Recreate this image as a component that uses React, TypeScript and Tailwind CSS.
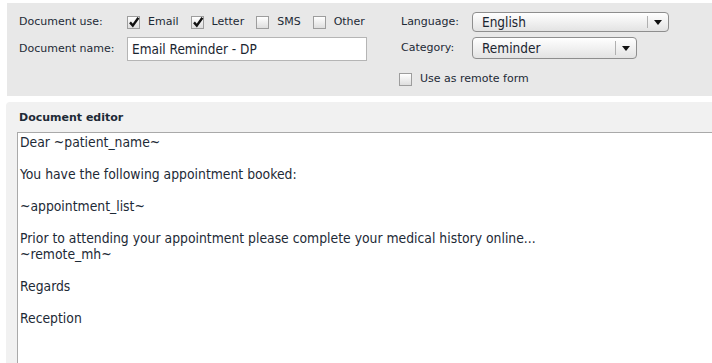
import React from "react";

const ink = "text-[#1d2a36]";
const labelFont = { fontFamily: '"DejaVu Sans", Verdana, sans-serif' };
const bodyFont = { fontFamily: '"DejaVu Sans Condensed", "DejaVu Sans", Tahoma, sans-serif' };

function Box({ checked }: { checked?: boolean }) {
  return (
    <span className="relative flex h-[13px] w-[13px] shrink-0 items-center justify-center border border-[#9d9d9d] bg-gradient-to-b from-white to-[#dedede]">
      {checked && (
        <svg width="12" height="12" viewBox="0 0 12 12" className="absolute left-[0px] top-[-1px]">
          <path d="M2 6.4 L4.8 9.6 L10.4 1.8" fill="none" stroke="#111" strokeWidth="2.4" />
        </svg>
      )}
    </span>
  );
}

function Check({ label, checked }: { label: string; checked?: boolean }) {
  return (
    <label className="flex items-center gap-[8px]">
      <Box checked={checked} />
      <span>{label}</span>
    </label>
  );
}

function Select({ value, width, height }: { value: string; width: string; height: string }) {
  return (
    <div
      className={`flex items-center rounded-[4px] border border-[#8e8e8e] bg-gradient-to-b from-white to-[#e3e3e3] ${width} ${height}`}
    >
      <span className="flex-1 pl-[9px] text-[13.5px] text-[#1b2530]" style={bodyFont}>
        {value}
      </span>
      <span className="h-[70%] w-px bg-[#b0b0b0]" />
      <span className="flex w-[20px] justify-center">
        <svg width="8" height="5" viewBox="0 0 8 5">
          <path d="M0 0 H8 L4 5 Z" fill="#111" />
        </svg>
      </span>
    </div>
  );
}

export default function App() {
  return (
    <div className={`h-[363px] w-[712px] overflow-hidden bg-white ${ink}`}>
      <div className="ml-[7px] mt-[3px] flex h-[93px] bg-[#e8e8e8] pl-[12px] pt-[9px] text-[11px]" style={labelFont}>
        <div className="w-[382px]">
          <div className="flex h-[20px] items-center">
            <span className="w-[108px]">Document use:</span>
            <div className="flex items-center gap-[12px]">
              <Check label="Email" checked />
              <Check label="Letter" checked />
              <Check label="SMS" />
              <Check label="Other" />
            </div>
          </div>
          <div className="mt-[5px] flex h-[24px] items-center">
            <span className="w-[108px]">Document name:</span>
            <input
              readOnly
              value="Email Reminder - DP"
              className="h-[24px] w-[240px] border border-[#b5b5b5] bg-white pl-[4px] text-[13.5px] text-[#1b2530] outline-none"
              style={bodyFont}
            />
          </div>
        </div>
        <div>
          <div className="flex h-[20px] items-center">
            <span className="w-[71px]">Language:</span>
            <Select value="English" width="w-[197px]" height="h-[20px]" />
          </div>
          <div className="mt-[5px] flex h-[22px] items-center">
            <span className="w-[71px]">Category:</span>
            <Select value="Reminder" width="w-[165px]" height="h-[22px]" />
          </div>
          <div className="-ml-[2px] mt-[12px]">
            <Check label="Use as remote form" />
          </div>
        </div>
      </div>

      <div className="ml-[6px] mt-[6px] h-[261px] rounded-tl-[4px] bg-[#f1f1f1]">
        <div className="h-[30px] pl-[13px] pt-[8px] text-[11px] font-bold" style={labelFont}>
          Document editor
        </div>
        <div
          className="ml-[11px] h-[231px] border-l border-t border-[#a9a9a9] bg-white pl-[2px] pt-[1px] text-[13.8px] leading-[16px] whitespace-pre"
          style={bodyFont}
        >
          {`Dear ~patient_name~

You have the following appointment booked:

~appointment_list~

Prior to attending your appointment please complete your medical history online...
~remote_mh~

Regards

Reception`}
        </div>
      </div>
    </div>
  );
}
